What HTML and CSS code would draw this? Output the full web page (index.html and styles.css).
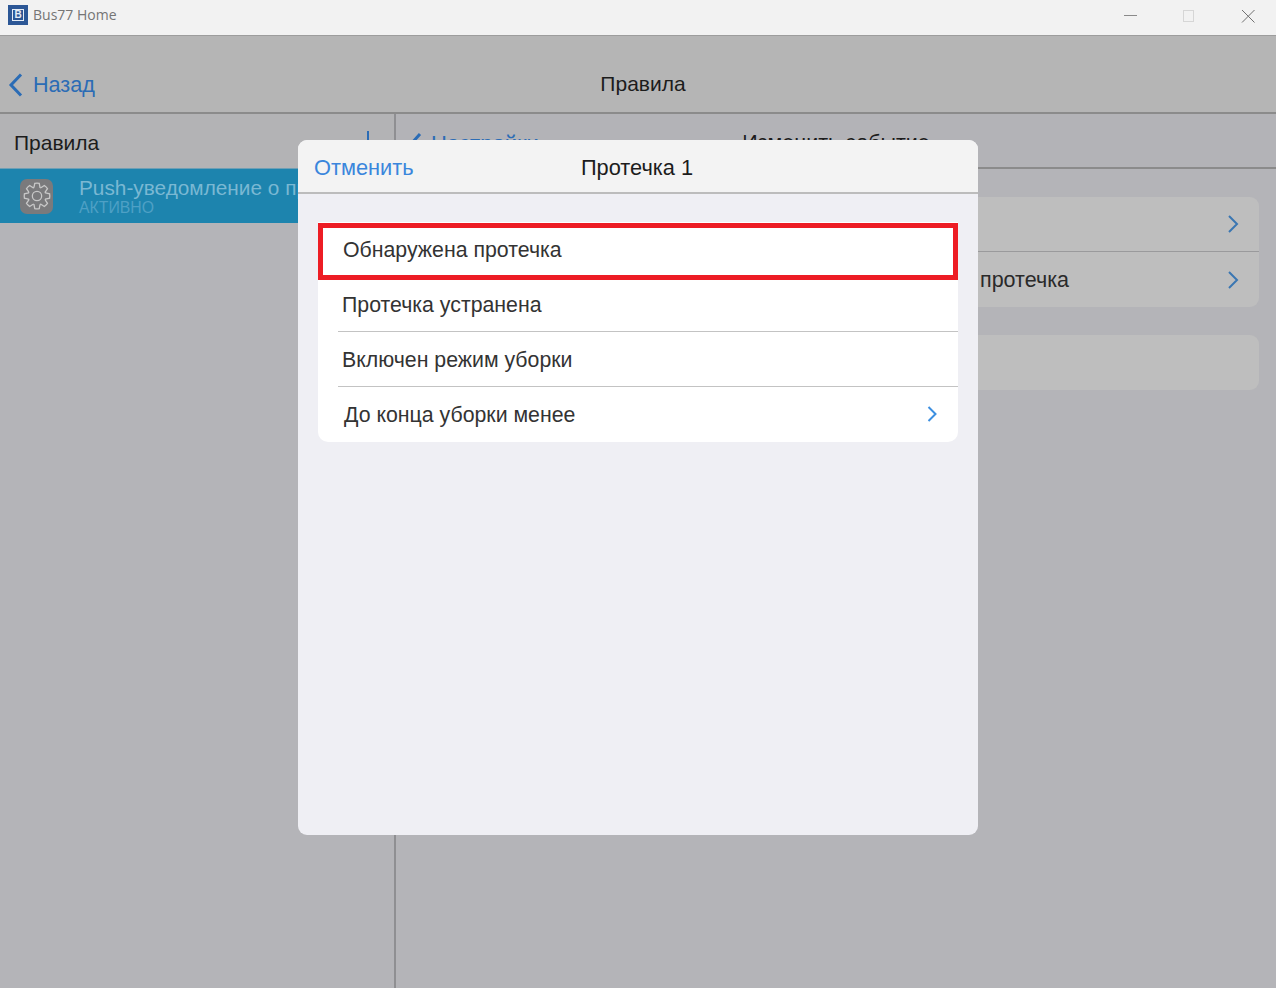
FILE: index.html
```html
<!DOCTYPE html>
<html lang="ru">
<head>
<meta charset="utf-8">
<title>Bus77 Home</title>
<link rel="stylesheet" href="styles.css">
</head>
<body>
<div class="window">
  <header class="titlebar">
    <div class="app-icon"><span class="app-icon-inner">B</span></div>
    <span class="app-name">Bus77 Home</span>
    <div class="controls">
      <svg class="ctl" width="58" height="35" viewBox="0 0 58 35"><path d="M23 15.500h13" stroke="#8a8a8a" fill="none"/></svg>
      <svg class="ctl" width="58" height="35" viewBox="0 0 58 35"><rect x="24.500" y="10.500" width="10" height="11" stroke="#d6d6d6" fill="none"/></svg>
      <svg class="ctl" width="58" height="35" viewBox="0 0 58 35"><path d="M25 10l12.500 12.500M37.500 10L25 22.500" stroke="#707070" fill="none"/></svg>
    </div>
  </header>
  <nav class="topnav">
    <a class="back">
      <svg class="back-chev" width="16" height="26" viewBox="0 0 16 26"><path d="M13 2.500L3 13l10 10.500" stroke="#2b6cb5" stroke-width="3" fill="none"/></svg>
      <span>Назад</span>
    </a>
    <div class="topnav-title">Правила</div>
  </nav>
  <div class="split">
    <aside class="sidebar">
      <div class="side-head">
        <span class="side-title">Правила</span>
        <svg class="plus" width="20" height="20" viewBox="0 0 20 20"><path d="M10 0v20M0 10h20" stroke="#2b6cb5" stroke-width="2" fill="none"/></svg>
      </div>
      <div class="side-item">
        <div class="gear-box">
          <svg width="28" height="28" viewBox="-12 -12 24 24" fill="none" stroke="#c8c8c8" stroke-width="1.100">
            <defs><path id="tooth" d="M7.300-2.600L10.800-1.900A11 11 0 0 1 10.800 1.900L7.300 2.600A7.750 7.750 0 0 1 6.900 3.500"/></defs>
            <use href="#tooth"/>
            <use href="#tooth" transform="rotate(45)"/>
            <use href="#tooth" transform="rotate(90)"/>
            <use href="#tooth" transform="rotate(135)"/>
            <use href="#tooth" transform="rotate(180)"/>
            <use href="#tooth" transform="rotate(225)"/>
            <use href="#tooth" transform="rotate(270)"/>
            <use href="#tooth" transform="rotate(315)"/>
            <circle r="4"/>
          </svg>
        </div>
        <div class="item-text">
          <div class="item-title">Push-уведомление о протечке</div>
          <div class="item-sub">АКТИВНО</div>
        </div>
      </div>
    </aside>
    <main class="detail">
      <div class="detail-head">
        <a class="detail-back">
          <svg width="14" height="24" viewBox="0 0 14 24"><path d="M12 2L3 12l9 10" stroke="#2b6cb5" stroke-width="3" fill="none"/></svg>
          <span>Настройки</span>
        </a>
        <div class="detail-title">Изменить событие</div>
      </div>
      <div class="group">
        <div class="group-row">
          <svg class="chev" width="12" height="20" viewBox="0 0 12 20"><path d="M2 2l8 8-8 8" stroke="#3a76b2" stroke-width="2" fill="none"/></svg>
        </div>
        <div class="group-row">
          <span class="group-text">Протечка 1: Обнаружена протечка</span>
          <svg class="chev" width="12" height="20" viewBox="0 0 12 20"><path d="M2 2l8 8-8 8" stroke="#3a76b2" stroke-width="2" fill="none"/></svg>
        </div>
      </div>
      <div class="group group-second"><div class="group-row"></div></div>
    </main>
  </div>

  <section class="modal">
    <div class="modal-head">
      <a class="cancel">Отменить</a>
      <div class="modal-title">Протечка 1</div>
    </div>
    <div class="modal-body">
      <div class="list">
        <div class="list-row">Обнаружена протечка</div>
        <div class="list-row inset">Протечка устранена</div>
        <div class="list-row inset">Включен режим уборки</div>
        <div class="list-row last">
          <span class="last-text">До конца уборки менее</span>
          <svg class="chev-modal" width="12" height="20" viewBox="0 0 12 20"><path d="M2.500 3l7 7-7 7" stroke="#3d8fe0" stroke-width="2" fill="none"/></svg>
        </div>
        <div class="highlight"></div>
      </div>
    </div>
  </section>
</div>
</body>
</html>
```
FILE: styles.css
```css
* { box-sizing: border-box; }
html, body { margin: 0; padding: 0; }
body {
  width: 1276px;
  height: 988px;
  overflow: hidden;
  font-family: "Liberation Sans", Arial, sans-serif;
  color: #1c1c1c;
  background: #b4b4b8;
}
.window { position: relative; width: 1276px; height: 988px; display: flex; flex-direction: column; }

.titlebar {
  height: 36px;
  flex: none;
  display: flex;
  align-items: center;
  padding: 0 0 1px 8px;
  background: #f2f2f2;
  border-bottom: 1px solid #9d9d9d;
}
.app-icon {
  width: 20px; height: 20px;
  background: #2c5796;
  display: flex; align-items: center; justify-content: center;
  margin-top: -5px;
}
.app-icon-inner {
  width: 12px; height: 12px;
  border: 1px solid #e4ecf6;
  color: #e4ecf6;
  font: bold 10px/10px "Liberation Sans", sans-serif;
  text-align: center;
}
.app-name {
  margin-left: 5px;
  margin-top: -5px;
  font: 14px "Open Sans", sans-serif;
  color: #757575;
}
.controls { margin-left: auto; display: flex; margin-right: 1px; }
.ctl { display: block; }

.topnav {
  height: 78px;
  flex: none;
  position: relative;
  display: flex;
  align-items: center;
  justify-content: center;
  background: #b5b5b5;
  border-bottom: 2px solid #8b8b8b;
  font-size: 21px;
}
.back {
  position: absolute;
  left: 8px; top: 36px;
  display: flex; align-items: center; gap: 9px;
  color: #2b6cb5;
  font-size: 21.600px;
}
.back-chev { display: block; }
.topnav-title { padding-top: 20px; margin-left: 10px; }

.split { flex: 1; display: flex; min-height: 0; }
.sidebar { width: 396px; flex: none; border-right: 2px solid #8f8f92; overflow: hidden; }
.side-head {
  height: 54px;
  position: relative;
  display: flex; align-items: center;
  padding: 4px 0 0 14px;
  background: #b3b3b5;
  font-size: 21px;
}
.side-title { display: block; }
.plus { position: absolute; left: 358px; top: 17px; }
.side-item {
  height: 55px;
  display: flex; align-items: center;
  padding-left: 20px;
  background: #1d84ae;
  border-top: 1px solid #6d9fb5;
}
.gear-box {
  width: 33px; height: 35px;
  border-radius: 7px;
  background: #7a7a7c;
  display: flex; align-items: center; justify-content: center;
  flex: none;
}
.item-text { margin-left: 26px; white-space: nowrap; }
.item-title { font-size: 20.800px; line-height: 22px; color: #7ab8d3; }
.item-sub { font-size: 15.800px; line-height: 16px; margin-top: 1px; color: #4ea0c5; }

.detail { flex: 1; padding: 0; min-width: 0; }
.detail-head {
  height: 55px;
  position: relative;
  border-bottom: 2px solid #8b8b8b;
  background: #b3b3b7;
  font-size: 21.500px;
  display: flex; align-items: center; justify-content: center;
  padding-top: 5px;
}
.detail-back {
  position: absolute; left: 12px; top: 17px;
  display: flex; align-items: center; gap: 9px;
  color: #2b6cb5;
  font-size: 22px;
}
.group {
  margin: 28px 17px 0 20px;
  background: #bebebe;
  border-radius: 9px;
}
.group-second { margin-top: 28px; }
.group-row {
  height: 55px;
  display: flex; align-items: center; justify-content: flex-end;
  padding-right: 20px;
  position: relative;
  border-bottom: 1px solid #9a9a9c;
}
.group-row:last-child { border-bottom: 0; }
.group-text { position: absolute; right: 190px; font-size: 21.500px; white-space: nowrap; top: 16px; color: #2a2a2a; }
.chev { display: block; }

.modal {
  position: absolute;
  left: 298px; top: 140px;
  width: 680px; height: 695px;
  border-radius: 9px;
  overflow: hidden;
  background: #efeff4;
  display: flex; flex-direction: column;
}
.modal-head {
  height: 54px;
  flex: none;
  position: relative;
  display: flex; align-items: center; justify-content: center;
  background: #f3f3f3;
  border-bottom: 2px solid #bcbcbc;
  font-size: 21.800px;
  padding-top: 3px;
}
.cancel { position: absolute; left: 16px; top: 15px; color: #3a86dc; }
.modal-title { color: #1c1c1c; margin-left: -2px; }
.modal-body { padding: 28px 20px 0; }
.list {
  position: relative;
  background: #fff;
  border-radius: 0 0 10px 10px;
  font-size: 21.300px;
  color: #333;
}
.list-row {
  height: 55px;
  margin-left: 20px;
  padding: 2px 0 0 5px;
  display: flex; align-items: center;
  border-bottom: 1px solid #c3c3c3;
}
.list-row.inset { padding-left: 4px; }
.list-row.last { border-bottom: 0; padding-top: 0; justify-content: space-between; padding-right: 20px; }
.last-text { margin: 2px 0 0 1px; }
.chev-modal { display: block; margin-top: -1px; }
.highlight {
  position: absolute;
  left: 0; top: 1px;
  width: 640px; height: 57px;
  border: 5px solid #ed1c24;
}
```
